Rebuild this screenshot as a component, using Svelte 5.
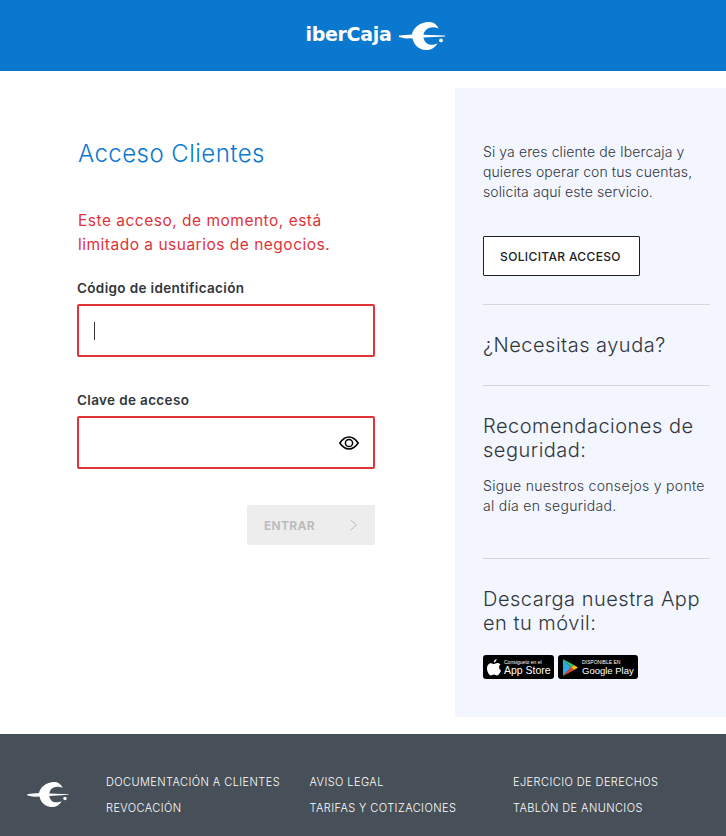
<script>
	const links = [
		['DOCUMENTACIÓN A CLIENTES', 'REVOCACIÓN'],
		['AVISO LEGAL', 'TARIFAS Y COTIZACIONES'],
		['EJERCICIO DE DERECHOS', 'TABLÓN DE ANUNCIOS']
	];
</script>

{#snippet mark(w, h)}
	<svg width={w} height={h} viewBox="0 0 46 28" fill="#fff">
		<path d="M0 13.4 L13 12.4 C14 6 21 0 30 0 C34 0 37.5 2 39.5 6.4 C36 5.2 32.5 5 30 6 C27 7.2 25 9.6 24.4 12.8 L46 13.6 L46 14.4 L24.4 15.6 C25.4 20 28 22.8 32 22.8 C34 22.8 36.4 22.4 38.6 21.2 C36 25.6 32.5 28 27.5 28 C20 28 15 23 13.4 16.2 L7 16.6 L0 15 Z" />
		<circle cx="42" cy="18.4" r="1.9" />
	</svg>
{/snippet}

<div class="page">
	<header class="top">
		<span class="brand">iberCaja</span>
		{@render mark(46, 28)}
	</header>

	<main class="content">
		<section class="login">
			<h1>Acceso Clientes</h1>
			<p class="error">Este acceso, de momento, está<br />limitado a usuarios de negocios.</p>

			<div class="label first">Código de identificación</div>
			<div class="field"><span class="caret"></span></div>

			<div class="label second">Clave de acceso</div>
			<div class="field eye-field">
				<svg width="20" height="14" viewBox="0 0 20 14" fill="none" stroke="#000" stroke-width="1.5">
					<path d="M.8 7 C4 2.4 7 1 10 1 C13 1 16 2.4 19.2 7 C16 11.6 13 13 10 13 C7 13 4 11.6 .8 7 Z" />
					<circle cx="10" cy="7" r="3.6" />
				</svg>
			</div>

			<div class="actions">
				<button class="enter" disabled>
					<span>ENTRAR</span>
					<svg width="9" height="12" viewBox="0 0 9 12" fill="none" stroke="#bdbdbd" stroke-width="1">
						<path d="M1.5 .8 L7.5 6 L1.5 11.2" />
					</svg>
				</button>
			</div>
		</section>

		<aside class="side">
			<p class="intro">Si ya eres cliente de Ibercaja y<br />quieres operar con tus cuentas,<br />solicita aquí este servicio.</p>
			<button class="request">SOLICITAR ACCESO</button>

			<div class="block help"><h2>¿Necesitas ayuda?</h2></div>

			<div class="block security">
				<h2>Recomendaciones de<br />seguridad:</h2>
				<p>Sigue nuestros consejos y ponte<br />al día en seguridad.</p>
			</div>

			<div class="block app">
				<h2>Descarga nuestra App<br />en tu móvil:</h2>
				<div class="badges">
					<div class="badge apple">
						<svg width="14" height="17" viewBox="0 0 14 17" fill="#fff">
							<path d="M9.6 0 C9.7 1.6 8.4 3.4 6.8 3.4 C6.6 1.8 8 .2 9.6 0 Z M13.6 5.6 C11.4 7 11.8 10.4 14 11.4 C13.2 13.6 11.6 16.4 10 16.4 C8.8 16.4 8.4 15.6 7 15.6 C5.6 15.6 5.2 16.4 4 16.4 C2.2 16.4 0 12.6 0 9.4 C0 6 2.2 4.2 4.2 4.2 C5.4 4.2 6.2 5 7 5 C7.8 5 8.8 4 10.4 4 C11.6 4 12.8 4.6 13.6 5.6 Z" />
						</svg>
						<div class="badge-text">
							<small>Consíguelo en el</small>
							<strong>App Store</strong>
						</div>
					</div>
					<div class="badge play">
						<svg width="15" height="17" viewBox="0 0 15 17">
							<path d="M0 0 L8 8.5 L0 17 Z" fill="#2fa8e8" />
							<path d="M0 0 L11 6 L8 8.5 Z" fill="#35c06a" />
							<path d="M0 17 L11 11 L8 8.5 Z" fill="#ea4335" />
							<path d="M11 6 L15 8.5 L11 11 L8 8.5 Z" fill="#fbbc04" />
						</svg>
						<div class="badge-text">
							<small>DISPONIBLE EN</small>
							<strong>Google Play</strong>
						</div>
					</div>
				</div>
			</div>
		</aside>
	</main>

	<footer class="bottom">
		<div class="foot-mark">{@render mark(42, 25)}</div>
		<nav class="foot-links">
			{#each links as col}
				<div class="col">
					{#each col as item}
						<a href="#top">{item}</a>
					{/each}
				</div>
			{/each}
		</nav>
	</footer>
</div>

<style>
	:global(body) {
		margin: 0;
		background: #fff;
	}

	.page {
		width: 726px;
		height: 836px;
		overflow: hidden;
		display: flex;
		flex-direction: column;
		font-family: Inter, 'Liberation Sans', sans-serif;
		color: #31363c;
	}

	.top {
		height: 71px;
		flex: none;
		background: #0b78d0;
		display: flex;
		align-items: center;
		justify-content: center;
		gap: 7px;
		padding-left: 24px;
		box-sizing: border-box;
	}

	.brand {
		font-family: 'DejaVu Sans', sans-serif;
		font-weight: 700;
		font-size: 19px;
		color: #fff;
		letter-spacing: -0.3px;
		padding-bottom: 3px;
	}

	.content {
		flex: 1;
		display: flex;
		justify-content: space-between;
		padding-top: 17px;
		padding-bottom: 17px;
		min-height: 0;
	}

	.login {
		width: 298px;
		margin-left: 77px;
		padding-top: 51px;
	}

	h1 {
		margin: 0 0 0 1px;
		font-weight: 300;
		font-size: 24px;
		line-height: 30px;
		letter-spacing: 0.45px;
		color: #0b78d0;
	}

	.error {
		margin: 40px 0 0 1px;
		font-weight: 400;
		font-size: 15.5px;
		line-height: 24px;
		letter-spacing: 0.5px;
		color: #df3338;
	}

	.label {
		font-weight: 600;
		font-size: 13.5px;
		line-height: 18px;
		letter-spacing: 0.35px;
	}

	.label.first {
		margin-top: 22px;
	}

	.label.second {
		margin-top: 34px;
	}

	.field {
		height: 53px;
		margin-top: 7px;
		box-sizing: border-box;
		border: 2px solid #df3338;
		border-radius: 2px;
		display: flex;
		align-items: center;
		padding: 0 15px;
	}

	.caret {
		width: 1px;
		height: 18px;
		background: #31363c;
	}

	.eye-field {
		justify-content: flex-end;
		padding-right: 14px;
	}

	.actions {
		display: flex;
		justify-content: flex-end;
		margin-top: 36px;
	}

	.enter {
		width: 128px;
		height: 40px;
		border: 0;
		border-radius: 2px;
		background: #ededed;
		display: flex;
		align-items: center;
		justify-content: space-between;
		padding: 0 17px;
		font-family: inherit;
		font-weight: 700;
		font-size: 12px;
		letter-spacing: 0.3px;
		color: #bdbdbd;
	}

	.side {
		width: 271px;
		box-sizing: border-box;
		background: #f3f6fe;
		padding: 54px 16px 0 28px;
	}

	.intro {
		margin: 0;
		font-weight: 300;
		font-size: 14px;
		line-height: 20px;
		letter-spacing: 0.1px;
		color: #31363c;
	}

	.request {
		display: block;
		margin-top: 34px;
		width: 157px;
		height: 40px;
		background: #fff;
		border: 1px solid #1c2126;
		border-radius: 1px;
		font-family: inherit;
		font-weight: 500;
		font-size: 12px;
		letter-spacing: 0.35px;
		color: #1c2126;
		padding: 0 2px 0 0;
	}

	.block {
		border-top: 1px solid #d3d7de;
	}

	.help {
		margin-top: 28px;
		padding-top: 28px;
		height: 52px;
	}

	.security {
		padding-top: 28px;
		height: 144px;
	}

	.app {
		padding-top: 28px;
	}

	h2 {
		margin: 0;
		font-weight: 300;
		font-size: 20px;
		line-height: 24px;
		letter-spacing: 0.5px;
		color: #31363c;
	}

	.security p {
		margin: 14px 0 0;
		font-weight: 300;
		font-size: 14px;
		line-height: 20px;
		letter-spacing: 0.3px;
	}

	.badges {
		display: flex;
		gap: 4px;
		margin-top: 20px;
	}

	.badge {
		height: 24px;
		background: #000;
		border-radius: 3px;
		display: flex;
		align-items: center;
		gap: 3px;
		box-sizing: border-box;
		color: #fff;
		padding-left: 4px;
	}

	.apple {
		width: 71px;
	}

	.play {
		width: 80px;
		gap: 4px;
		padding-left: 5px;
	}

	.badge-text {
		display: flex;
		flex-direction: column;
		font-family: 'Liberation Sans', sans-serif;
	}

	.badge-text small {
		font-size: 5px;
		line-height: 6px;
	}

	.badge-text strong {
		font-weight: 400;
		font-size: 10.5px;
		line-height: 11px;
		white-space: nowrap;
	}

	.play strong {
		font-size: 9.5px;
	}

	.bottom {
		height: 102px;
		flex: none;
		background: #474f58;
		display: flex;
		align-items: center;
	}

	.foot-mark {
		width: 106px;
		padding-left: 27px;
		box-sizing: border-box;
		display: flex;
		padding-top: 18px;
	}

	.foot-links {
		display: flex;
		padding-top: 20px;
	}

	.col {
		width: 203.5px;
		display: flex;
		flex-direction: column;
		gap: 8px;
	}

	.col a {
		font-weight: 300;
		font-size: 11px;
		line-height: 18px;
		letter-spacing: 0.42px;
		color: #fff;
		text-decoration: none;
		white-space: nowrap;
	}
</style>
